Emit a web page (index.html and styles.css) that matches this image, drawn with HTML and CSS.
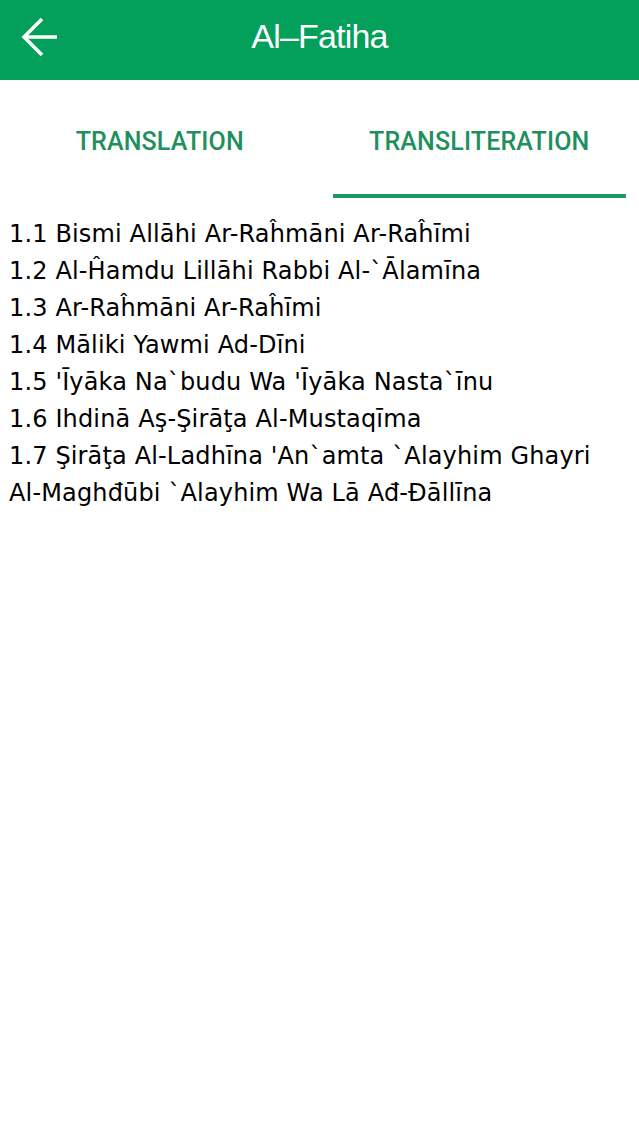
FILE: index.html
```html
<!DOCTYPE html>
<html lang="en">
<head>
    <meta charset="UTF-8">
    <meta name="viewport" content="width=device-width, initial-scale=1.0">
    <title>Al-Fatiha</title>
    <link rel="stylesheet" href="styles.css">
</head>
<body>
    <!-- Top Bar -->
    <div class="top-bar">
        <div class="back-button">
            <svg width="40" height="40" viewBox="0 0 40 40">
                <path d="M37 20 H4 M22 2 L4 20 L22 38" fill="none" stroke="#fff" stroke-width="3.5" stroke-linejoin="miter"/>
            </svg>
        </div>
        <div class="title">Al–Fatiha</div>
        <div class="spacer"></div>
    </div>

    <!-- Tabs -->
    <div class="tabs">
        <div class="tab">TRANSLATION</div>
        <div class="tab active">TRANSLITERATION</div>
    </div>

    <!-- Verses -->
    <div class="verses">
        <p>1.1 Bismi Allāhi Ar-Raĥmāni Ar-Raĥīmi</p>
        <p>1.2 Al-Ĥamdu Lillāhi Rabbi Al-`Ālamīna</p>
        <p>1.3 Ar-Raĥmāni Ar-Raĥīmi</p>
        <p>1.4 Māliki Yawmi Ad-Dīni</p>
        <p>1.5 'Īyāka Na`budu Wa 'Īyāka Nasta`īnu</p>
        <p>1.6 Ihdinā Aş-Şirāţa Al-Mustaqīma</p>
        <p>1.7 Şirāţa Al-Ladhīna 'An`amta `Alayhim Ghayri <span class="nowrap">Al-Maghđūbi</span> `Alayhim Wa Lā Ađ-Đāllīna</p>
    </div>
</body>
</html>
```

FILE: styles.css
```css
body {
    margin: 0;
    padding: 0;
    background-color: #fff;
    font-family: "DejaVu Sans", sans-serif;
    color: #000;
}

/* Top Bar */
.top-bar {
    height: 80px;
    padding-bottom: 7px;
    box-sizing: border-box;
    background-color: #02a05a;
    display: flex;
    align-items: center;
}

.back-button {
    width: 80px;
    padding-left: 20px;
    box-sizing: border-box;
    display: flex;
    align-items: center;
}

.back-button svg {
    display: block;
}

.title {
    flex: 1;
    text-align: center;
    color: #fff;
    font-family: "Liberation Sans", Arial, sans-serif;
    font-size: 34px;
    letter-spacing: -0.8px;
}

.spacer {
    width: 80px;
}

/* Tabs */
.tabs {
    display: flex;
}

.tab {
    flex: 1;
    margin: 0 13px;
    height: 118px;
    padding-top: 9px;
    display: flex;
    align-items: center;
    justify-content: center;
    font-family: Roboto, "Liberation Sans", sans-serif;
    font-weight: 500;
    font-size: 25px;
    letter-spacing: 0.15px;
    color: #1f8f5e;
    border-bottom: 4px solid transparent;
    box-sizing: border-box;
}

.tab.active {
    border-bottom-color: #1e9a5e;
}

/* Verses */
.verses {
    padding: 18px 8px 0 9px;
}

.verses p {
    margin: 0;
    font-size: 24px;
    line-height: 37px;
    letter-spacing: 0.15px;
}

.nowrap {
    white-space: nowrap;
}
```
